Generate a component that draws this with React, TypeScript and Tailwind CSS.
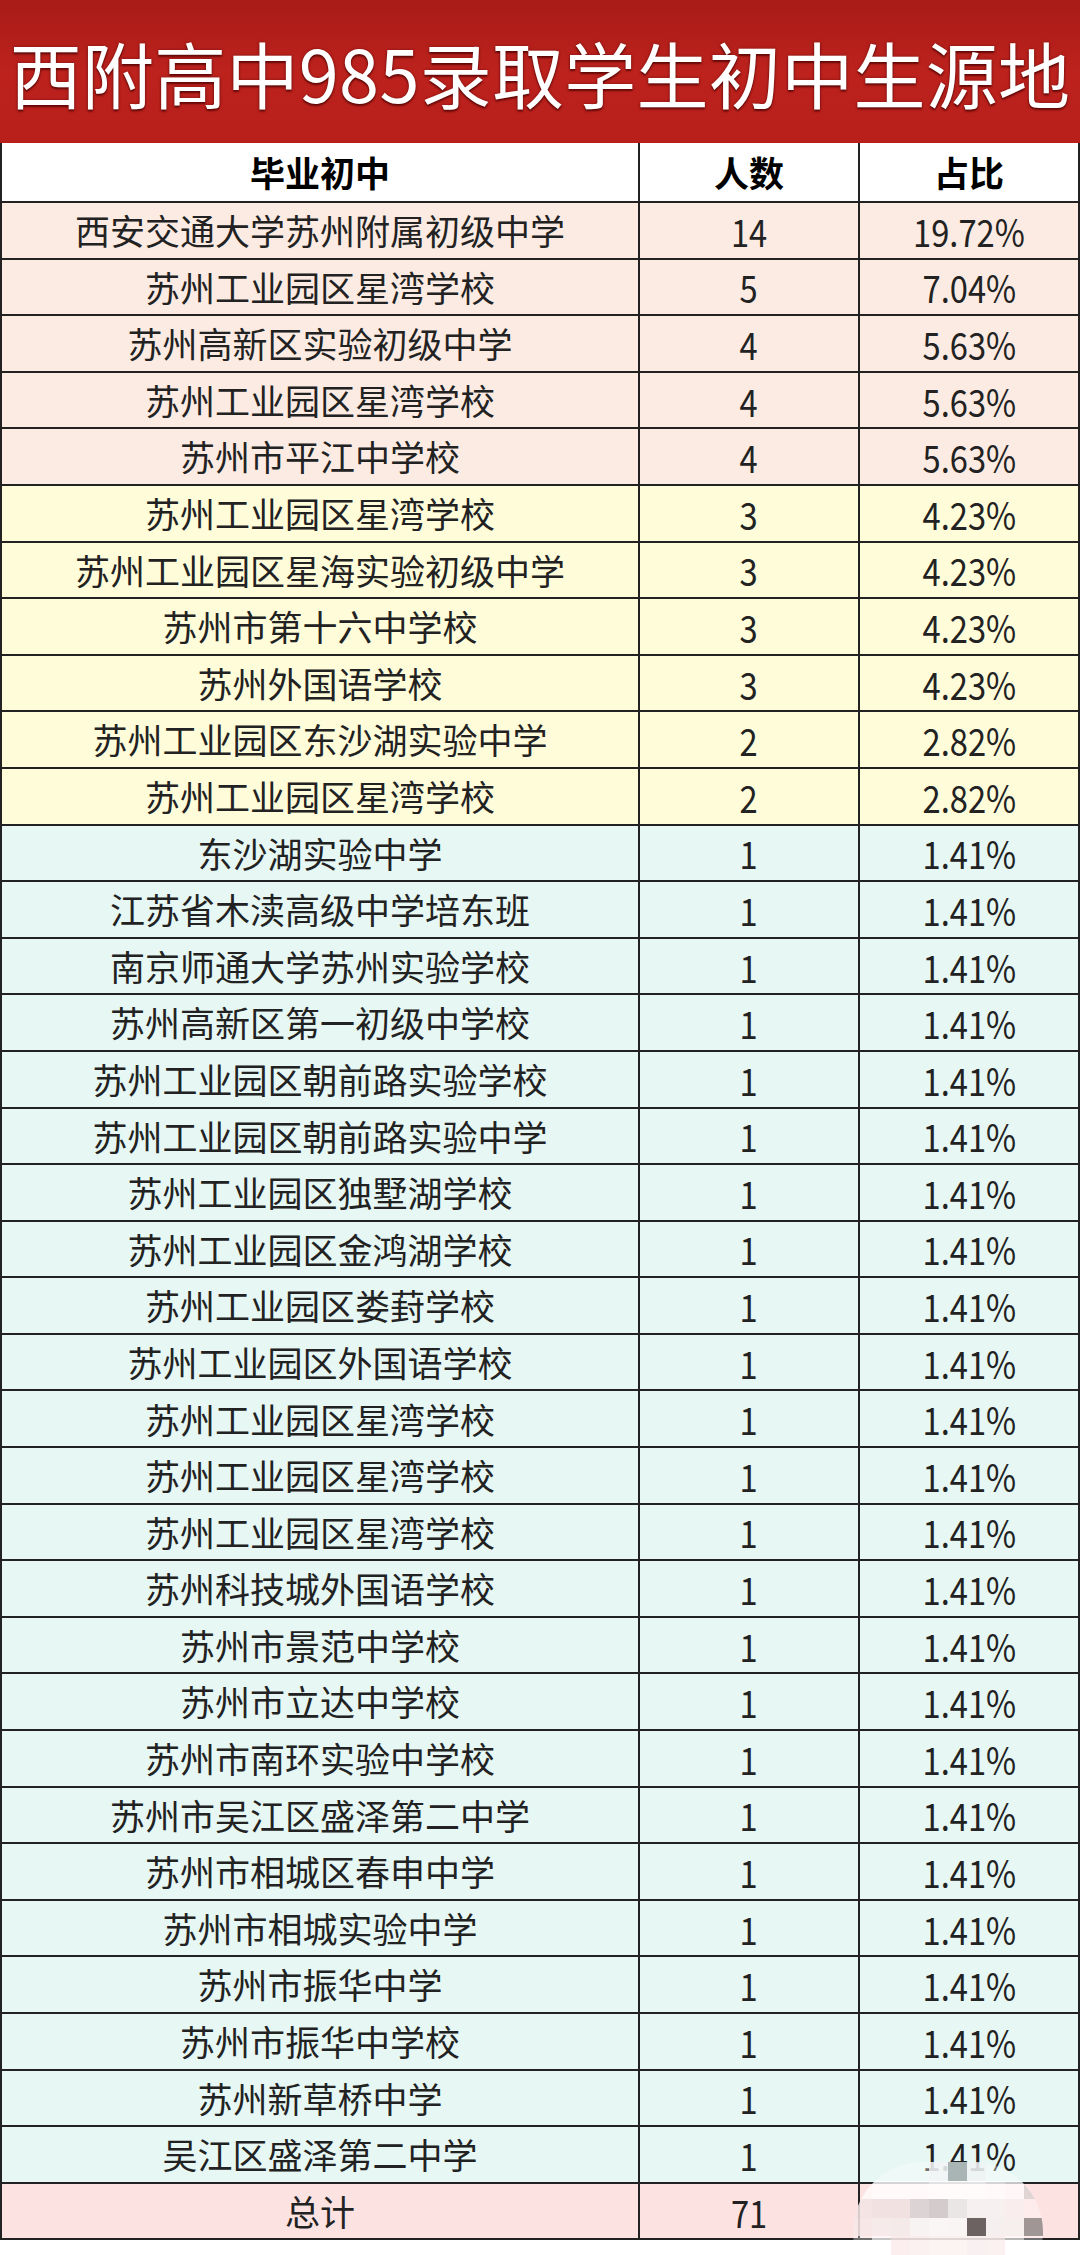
import React from "react";

type Row = { name: string; count: number; pct: string; tone: "pink" | "yellow" | "cyan" };

const rows: Row[] = [
  { name: "西安交通大学苏州附属初级中学", count: 14, pct: "19.72%", tone: "pink" },
  { name: "苏州工业园区星湾学校", count: 5, pct: "7.04%", tone: "pink" },
  { name: "苏州高新区实验初级中学", count: 4, pct: "5.63%", tone: "pink" },
  { name: "苏州工业园区星湾学校", count: 4, pct: "5.63%", tone: "pink" },
  { name: "苏州市平江中学校", count: 4, pct: "5.63%", tone: "pink" },
  { name: "苏州工业园区星湾学校", count: 3, pct: "4.23%", tone: "yellow" },
  { name: "苏州工业园区星海实验初级中学", count: 3, pct: "4.23%", tone: "yellow" },
  { name: "苏州市第十六中学校", count: 3, pct: "4.23%", tone: "yellow" },
  { name: "苏州外国语学校", count: 3, pct: "4.23%", tone: "yellow" },
  { name: "苏州工业园区东沙湖实验中学", count: 2, pct: "2.82%", tone: "yellow" },
  { name: "苏州工业园区星湾学校", count: 2, pct: "2.82%", tone: "yellow" },
  ...[
    "东沙湖实验中学",
    "江苏省木渎高级中学培东班",
    "南京师通大学苏州实验学校",
    "苏州高新区第一初级中学校",
    "苏州工业园区朝前路实验学校",
    "苏州工业园区朝前路实验中学",
    "苏州工业园区独墅湖学校",
    "苏州工业园区金鸿湖学校",
    "苏州工业园区娄葑学校",
    "苏州工业园区外国语学校",
    "苏州工业园区星湾学校",
    "苏州工业园区星湾学校",
    "苏州工业园区星湾学校",
    "苏州科技城外国语学校",
    "苏州市景范中学校",
    "苏州市立达中学校",
    "苏州市南环实验中学校",
    "苏州市吴江区盛泽第二中学",
    "苏州市相城区春申中学",
    "苏州市相城实验中学",
    "苏州市振华中学",
    "苏州市振华中学校",
    "苏州新草桥中学",
    "吴江区盛泽第二中学",
  ].map((name) => ({ name, count: 1, pct: "1.41%", tone: "cyan" as const })),
];

const toneBg = {
  pink: "bg-[#fcebe2]",
  yellow: "bg-[#fffcda]",
  cyan: "bg-[#e6f7f4]",
};

// mosaic cells of the blurred watermark, 10 x 5, "" = clear
const mosaic = [
  "", "", "", "", "bg-[#f2f4f4]/80", "bg-[#a9b4b4]", "bg-[#eef2f2]/80", "", "", "",
  "bg-white/60", "bg-white/70", "bg-white/70", "bg-white/70", "bg-white/80", "bg-white/80", "bg-white/80", "bg-white/70", "bg-white/60", "bg-[#d8d0d0]/80",
  "bg-[#f3e2e2]/80", "bg-[#efdede]/80", "bg-[#efdede]/80", "bg-[#dcd4d4]", "bg-[#d4cccc]", "bg-[#ebe6e6]", "bg-[#f6f0f0]", "bg-[#f6f0f0]", "bg-[#f7eeee]/80", "",
  "bg-[#f6e6e6]/80", "bg-[#f5eaea]/80", "bg-[#f4eaea]", "bg-[#f8f3f3]", "bg-[#faf6f6]", "bg-[#faf5f5]", "bg-[#6d6262]", "bg-[#f5efef]", "bg-[#f7eeee]", "bg-[#a09696]",
  "", "bg-white/60", "bg-[#fbeaea]/80", "bg-[#faeeee]/80", "bg-[#fbf0f0]/80", "bg-[#fbf0f0]/80", "bg-[#f7eded]/80", "bg-[#faeeee]/80", "bg-white/50", "",
];

const cjk = "font-['Noto_Sans_CJK_SC',sans-serif]";

function Num({ children }: { children: React.ReactNode }) {
  return <span className={`inline-block scale-x-[0.86] text-[38px] ${cjk}`}>{children}</span>;
}

function TableRow({ name, count, pct, bg }: { name: string; count: React.ReactNode; pct: string; bg: string }) {
  return (
    <div className={`flex h-[56.6px] border-b-2 border-[#222] text-[#222] ${bg}`}>
      <div className={`flex w-[638px] items-center justify-center border-r-2 border-[#222] text-[35px] ${cjk}`}>{name}</div>
      <div className="flex w-[220px] items-center justify-center border-r-2 border-[#222]">
        <Num>{count}</Num>
      </div>
      <div className="flex flex-1 items-center justify-center">
        <Num>{pct}</Num>
      </div>
    </div>
  );
}

export default function App() {
  return (
    <div className="relative h-[2255px] w-[1080px] overflow-hidden bg-white">
      {/* title band */}
      <div className="flex h-[143px] items-center justify-center bg-gradient-to-b from-[#a81b17] via-[#bd221d] to-[#b81f1b]">
        <h1
          className={`text-[72px] leading-none text-white tracking-[0.3px] [text-shadow:0_2px_2px_rgba(70,0,0,0.7),0_0_3px_rgba(70,0,0,0.5)] ${cjk}`}
        >
          西附高中985录取学生初中生源地
        </h1>
      </div>

      <div className="border-x-2 border-[#222]">
        {/* header */}
        <div className={`flex h-[60px] border-b-2 border-[#222] bg-white text-[35px] font-bold text-black ${cjk}`}>
          <div className="flex w-[638px] items-center justify-center border-r-2 border-[#222]">毕业初中</div>
          <div className="flex w-[220px] items-center justify-center border-r-2 border-[#222]">人数</div>
          <div className="flex flex-1 items-center justify-center">占比</div>
        </div>

        {rows.map((r, i) => (
          <TableRow key={i} name={r.name} count={r.count} pct={r.pct} bg={toneBg[r.tone]} />
        ))}

        <TableRow name="总计" count={71} pct="" bg="bg-[#fde2e2]" />
      </div>

      {/* mosaic watermark over the corner */}
      <div className="absolute left-[853px] top-[2162px] grid h-[93px] w-[190px] grid-cols-10 overflow-hidden rounded-t-[70px] rounded-b-[20px] bg-white/35">
        {mosaic.map((c, i) => (
          <div key={i} className={c} />
        ))}
      </div>
    </div>
  );
}
